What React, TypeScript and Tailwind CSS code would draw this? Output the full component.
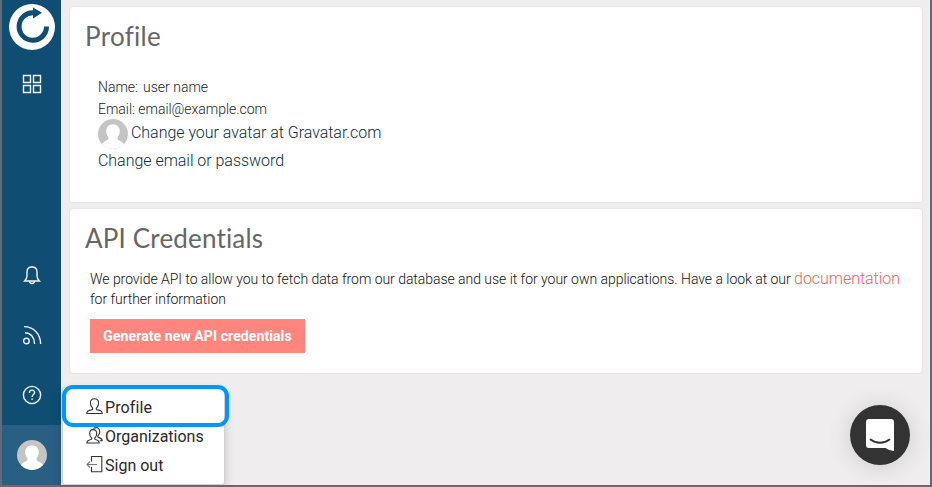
import type { ReactNode } from 'react';

function Avatar() {
  return (
    <svg className="block size-[30px] shrink-0" viewBox="0 0 30 30">
      <defs>
        <clipPath id="avatar-clip">
          <circle cx="15" cy="15" r="15" />
        </clipPath>
      </defs>
      <g clipPath="url(#avatar-clip)">
        <rect width="30" height="30" fill="#c4c4c4" />
        <path
          d="M15 5.300c4 0 6.800 2.900 6.800 6.800 0 2.400-.8 4.500-2.200 5.900v1.600c0 1 .6 1.500 1.700 1.900 2.500.9 4.500 2.500 5.400 5V31H3.300v-4.500c.9-2.500 2.900-4.100 5.400-5 1.100-.4 1.700-.9 1.700-1.900V18c-1.400-1.400-2.200-3.500-2.200-5.900 0-3.900 2.800-6.800 6.800-6.800z"
          fill="#fff"
        />
      </g>
    </svg>
  );
}

function Logo() {
  return (
    <svg className="block size-[46px]" viewBox="0 0 46 46">
      <circle cx="23" cy="23" r="23" fill="#fff" />
      <path d="M37.500 22.500A13.700 13.700 0 1 1 25 8.900" fill="none" stroke="#0f4d73" strokeWidth="5" />
      <path d="M24 3.600L33 8.800L24 14.400z" fill="#0f4d73" />
    </svg>
  );
}

function LineIcon({ children, className }: { children: ReactNode; className: string }) {
  return (
    <svg
      className={className}
      viewBox="0 0 20 20"
      fill="none"
      stroke="currentColor"
      strokeWidth="1.400"
    >
      {children}
    </svg>
  );
}

function Sidebar() {
  return (
    <nav className="flex w-[59px] shrink-0 flex-col items-center bg-[#0f4d73] pt-1 text-[#f0f4f7]">
      <Logo />
      <LineIcon className="mt-[24px] ml-px block size-5">
        <path d="M1.500 1.500h7v7h-7zM11.500 1.500h7v7h-7zM1.500 11.500h7v7h-7zM11.500 11.500h7v7h-7z" />
      </LineIcon>
      <LineIcon className="mt-[171px] ml-px block size-5">
        <path d="M2.600 16h14.800c-1.500-1.500-2.400-2.700-2.400-5V7c0-3-2-5-5-5S5 4 5 7v4c0 2.300-.9 3.500-2.400 5zM7.400 16c.2 3.300 5 3.300 5.200 0" />
      </LineIcon>
      <LineIcon className="mt-[40px] ml-px block size-5">
        <path d="M2 1.600c9.300 0 16.600 7.200 16.600 17.400M3 7.700c5.800.2 9.600 4.800 9.600 11.300" />
        <circle cx="4.400" cy="16" r="2.800" />
      </LineIcon>
      <LineIcon className="mt-[40px] ml-px block size-5">
        <circle cx="10" cy="10" r="8.600" />
        <path d="M7.400 8c0-3.800 5.200-3.600 5.200-.6 0 2-2.500 2.200-2.500 4.500M10.100 13.400v1.500" />
      </LineIcon>
      <div className="mt-auto flex h-[60px] w-full items-center bg-[#295f82] pl-[15px]">
        <Avatar />
      </div>
    </nav>
  );
}

function Card({ title, className, children }: { title: ReactNode; className: string; children: ReactNode }) {
  return (
    <section className={`rounded-[4px] border border-[#e7e5e6] bg-white pl-[15px] ${className}`}>
      {title}
      {children}
    </section>
  );
}

function UserMenu() {
  return (
    <div className="absolute top-[387px] left-[60px] h-[98px] w-[163px] rounded-[3px] border border-[#d2d1d2] bg-white pt-[5px] pl-[23px] text-[16px] leading-[29px] text-[#292929] shadow-[0_4px_10px_rgba(0,0,0,0.18)]">
      <div className="flex h-[29px] items-center">
        <svg className="mr-[2px] block size-[17px] -translate-y-px" viewBox="0 0 17 17" fill="none" stroke="#333" strokeWidth="1.100">
          <path d="M.8 15.500h15.400c-.1-2.400-1.300-2.900-4.800-3.600-1.500-.4-1.500-1.500-.5-2.400 1.100-1.300 1.700-2.500 1.700-4.500 0-2.600-1.500-4.300-4.100-4.300S4.400 2.400 4.400 5c0 2 .6 3.200 1.700 4.500 1 .9 1 2-.5 2.400-3.500.7-4.700 1.200-4.800 3.600z" />
        </svg>
        <span className="tracking-[0.100px]">Profile</span>
      </div>
      <div className="flex h-[29px] items-center">
        <svg className="mr-[2px] block size-[17px] -translate-y-px" viewBox="0 0 17 17" fill="none" stroke="#333" strokeWidth="1.100">
          <path d="M.8 16h12.500c-.1-2.300-1.100-2.800-3.700-3.500-1.200-.4-1.300-1.200-.4-2 .9-1 1.500-2.400 1.500-4.100 0-2.300-1.300-3.800-3.500-3.800S3.700 4.100 3.700 6.400c0 1.700.6 3.100 1.500 4.100.9.800.8 1.600-.4 2C1.900 13.200.9 13.700.8 16z" />
          <path d="M7.500 1.400C11-.6 14 1.500 13.700 5c-.1 1.500-.6 2.700-1.500 3.600-.7.800-.6 1.500.4 1.800 2.300.7 3.500 1.100 3.600 3.300h-2.500" />
        </svg>
        <span>Organizations</span>
      </div>
      <div className="flex h-[29px] items-center">
        <svg className="mr-[2px] block size-[17px] -translate-y-px" viewBox="0 0 17 17" fill="none" stroke="#333" strokeWidth="1.100">
          <path d="M5.500 5.500v-5h10.300v15.300H5.500v-5" />
          <path d="M11 8.500H1M4 5.300L1 8.500l3 3.200" stroke="#777" />
        </svg>
        <span>Sign out</span>
      </div>
    </div>
  );
}

export default function App() {
  return (
    <div className="relative flex h-[487px] w-[932px] overflow-hidden border-x-2 border-b-2 border-[#5f6b79] bg-[#efedee] font-['Roboto',sans-serif]">
      <Sidebar />
      <main className="flex min-w-0 flex-1 flex-col gap-[5px] pt-[6px] pr-[7px] pl-[8px]">
        <Card
          className="h-[197px]"
          title={
            <h1 className="pt-[12px] font-['Lato',sans-serif] text-[26px] leading-[34px] tracking-[0.300px] text-[#666]">
              Profile
            </h1>
          }
        >
          <div className="mt-[23px] pl-[13px] font-light text-[#222]">
            <p className="h-[22px] text-[14px] leading-[22px]">
              Name:<span className="ml-[5px]">user name</span>
            </p>
            <p className="h-[22px] text-[14px] leading-[22px] tracking-[-0.030px]">Email: email@example.com</p>
            <p className="-mt-px flex h-[30px] items-start gap-[3px] text-[16px] leading-[27px] tracking-[-0.030px] text-[#0b2c42]">
              <Avatar />
              <a>Change your avatar at Gravatar.com</a>
            </p>
            <p className="text-[16px] leading-[24px] tracking-[-0.030px] text-[#0b2c42]">
              <a>Change email or password</a>
            </p>
          </div>
        </Card>
        <Card
          className="h-[166px]"
          title={
            <h1 className="pt-[12px] font-['Lato',sans-serif] text-[26px] leading-[34px] tracking-[0.170px] text-[#666]">
              API Credentials
            </h1>
          }
        >
          <div className="pt-[14px] pl-[5px]">
            <p className="text-[14px] leading-[20px] font-light tracking-[-0.038px] whitespace-nowrap text-[#111]">
              We provide API to allow you to fetch data from our database and use it for your own applications. Have a
              look at our <a className="text-[16px] leading-none font-light text-[#ff5c5c]">documentation</a>
              <br />
              for further information
            </p>
            <button className="mt-[10px] block h-[34px] w-[215px] bg-[#ff867f] text-[14px] font-bold tracking-[0.090px] text-white">
              Generate new API credentials
            </button>
          </div>
        </Card>
      </main>
      <UserMenu />
      <div className="absolute top-[385px] left-[60px] h-[42px] w-[167px] rounded-[11px] border-4 border-[#0096ff]" />
      <button className="absolute top-[405px] left-[848px] flex size-[60px] items-center justify-center rounded-full bg-[#333] shadow-[0_2px_24px_rgba(0,0,0,0.14)]">
        <svg className="block h-8 w-7" viewBox="0 0 28 32">
          <path d="M3 0h22a3 3 0 0 1 3 3v29c-3.500-.5-6.200-1.500-8.500-3H3a3 3 0 0 1-3-3V3a3 3 0 0 1 3-3z" fill="#fff" />
          <path d="M4.500 20.500c5.500 4.300 13.500 4.300 19 0" fill="none" stroke="#333" strokeWidth="1.800" strokeLinecap="round" />
        </svg>
      </button>
    </div>
  );
}
